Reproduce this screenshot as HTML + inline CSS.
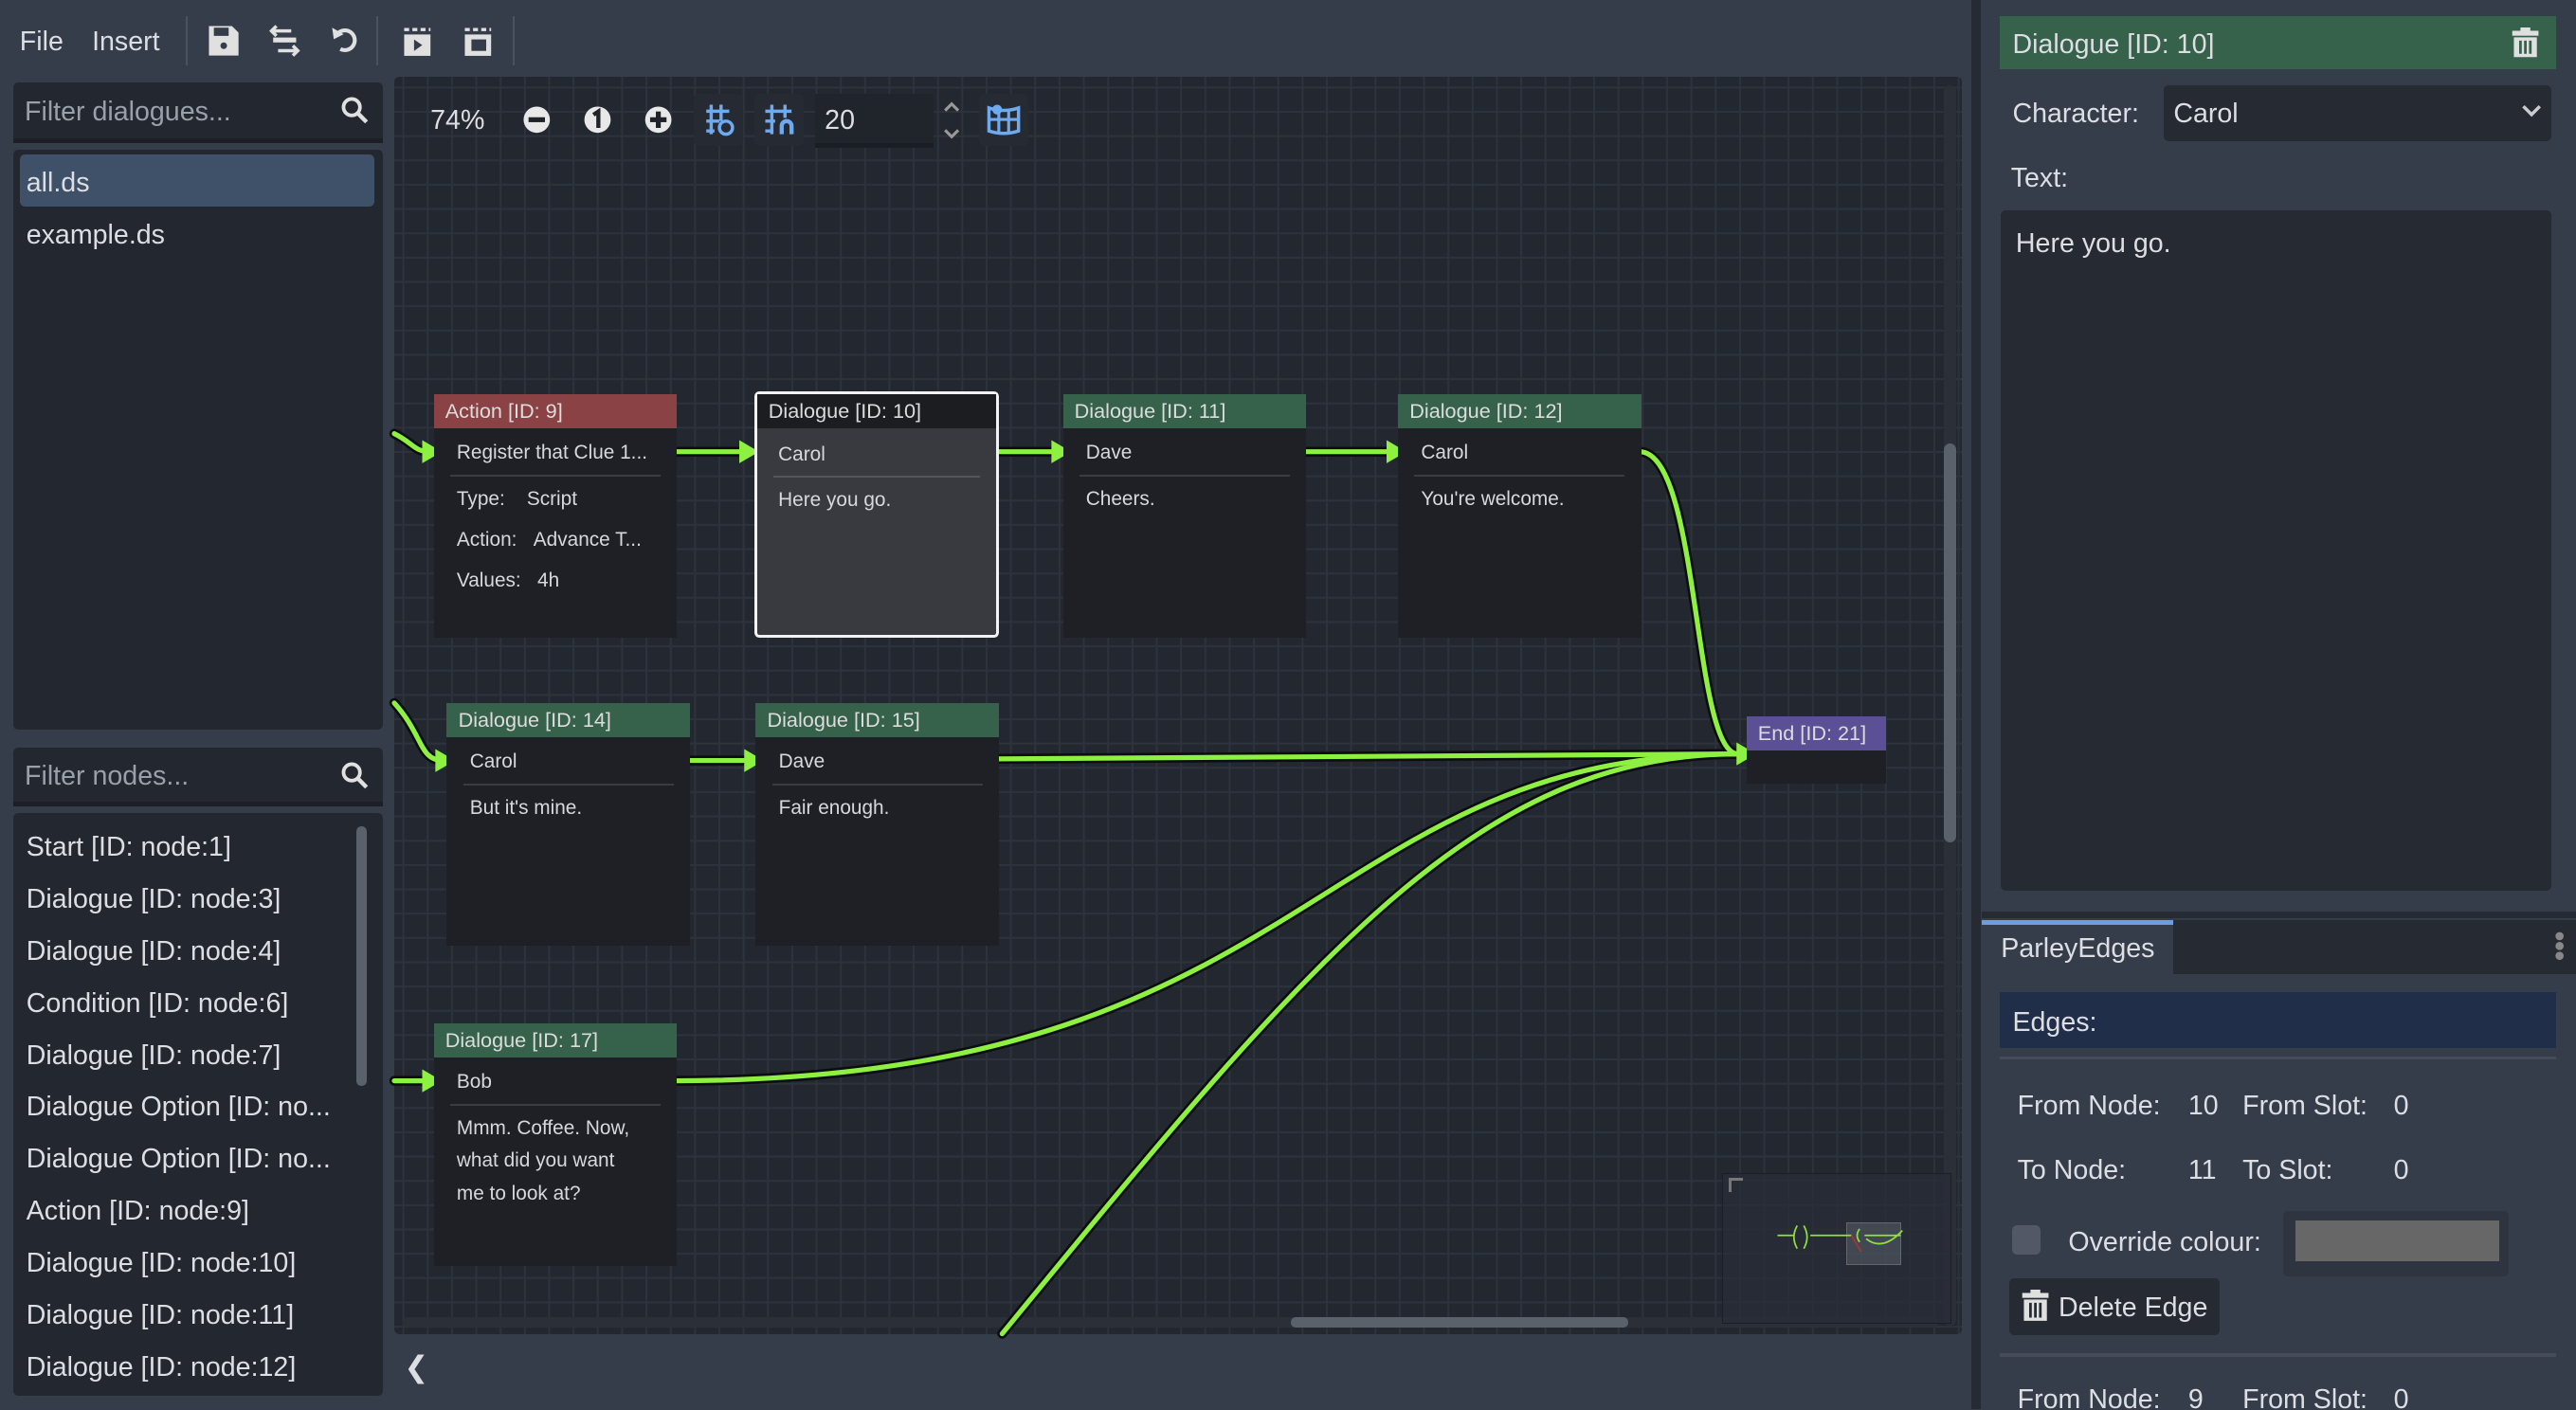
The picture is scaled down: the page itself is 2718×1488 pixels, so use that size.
<!DOCTYPE html>
<html><head><meta charset="utf-8"><style>
*{margin:0;padding:0;box-sizing:border-box}
html,body{width:2718px;height:1488px;overflow:hidden;background:#363d4a}
#r{position:absolute;left:0;top:0;width:1568px;height:858px;zoom:1.73342;font-family:"Liberation Sans",sans-serif;color:#dcdee3;background:#363d4a;overflow:hidden}
.a{position:absolute}
.t{font-size:16.5px;white-space:nowrap}
.n{position:absolute;background:#1f2025;font-size:12px;color:#d6d8dc}
.n .h{height:21px;line-height:21px;padding-left:7px;color:#dcdcdc;font-size:12.5px}
.n .row{position:absolute;white-space:nowrap}
.n .sep{position:absolute;height:1px;background:#3a3c42}
.grid{background-color:#232730;background-image:linear-gradient(#2d333d 1px,transparent 1px),linear-gradient(90deg,#2d333d 1px,transparent 1px);background-size:14.8px 14.8px;background-position:5px 6px}
</style></head><body><div id="r">

<div class="a t" style="left:12px;top:16px">File</div>
<div class="a t" style="left:56px;top:16px">Insert</div>
<div class="a" style="left:113px;top:10px;width:1px;height:30px;background:#4a5160"></div>
<div class="a" style="left:229px;top:10px;width:1px;height:30px;background:#4a5160"></div>
<div class="a" style="left:312px;top:10px;width:1px;height:30px;background:#4a5160"></div>
<svg class="a" style="left:125px;top:14px" width="22" height="22" viewBox="0 0 22 22"><path d="M2 2h14l4 4v14H2z" fill="#e0e0e0"/><rect x="5" y="3" width="9" height="5" fill="#363d4a"/><circle cx="11" cy="14" r="2" fill="#363d4a"/></svg>
<svg class="a" style="left:163px;top:14px" width="20" height="22" viewBox="0 0 20 22"><path d="M5 2L2 5l3 3M2 5h12M15 14l3 3-3 3M18 17H6" stroke="#e0e0e0" stroke-width="2" fill="none"/><rect x="3" y="9" width="14" height="3" fill="#e0e0e0"/></svg>
<svg class="a" style="left:200px;top:14px" width="20" height="20" viewBox="0 0 20 20"><path d="M6 6A6 6 0 1 1 7 16" stroke="#e0e0e0" stroke-width="2.4" fill="none"/><path d="M2 3l1 7 6-3z" fill="#e0e0e0"/></svg>
<svg class="a" style="left:244px;top:15px" width="20" height="20" viewBox="0 0 20 20"><path d="M2 3h3M7 3h3M12 3h3M17 3h1" stroke="#e0e0e0" stroke-width="2"/><rect x="2" y="6" width="16" height="13" fill="#e0e0e0"/><path d="M8 9l5 3.5-5 3.5z" fill="#363d4a"/></svg>
<svg class="a" style="left:281px;top:15px" width="20" height="20" viewBox="0 0 20 20"><path d="M2 3h3M7 3h3M12 3h3M17 3h1" stroke="#e0e0e0" stroke-width="2"/><rect x="2" y="6" width="16" height="13" fill="#e0e0e0"/><rect x="6" y="9" width="9" height="7" fill="#363d4a"/></svg>

<div class="a" style="left:8px;top:50px;width:225px;height:37px;background:#232830;border-radius:3px 3px 0 0;border-bottom:3px solid #1c2026"></div>
<div class="a t" style="left:15px;top:59px;color:#9aa0aa">Filter dialogues...</div>
<svg class="a" style="left:207px;top:58px" width="18" height="18" viewBox="0 0 18 18"><circle cx="7" cy="7" r="5" stroke="#e0e0e0" stroke-width="2.2" fill="none"/><path d="M11 11l5 5" stroke="#e0e0e0" stroke-width="2.5"/></svg>
<div class="a" style="left:8px;top:91px;width:225px;height:353px;background:#232830;border-radius:3px"></div>
<div class="a" style="left:12px;top:94px;width:216px;height:32px;background:#3e5169;border-radius:3px"></div>
<div class="a t" style="left:16px;top:102px">all.ds</div>
<div class="a t" style="left:16px;top:134px">example.ds</div>

<div class="a" style="left:8px;top:455px;width:225px;height:36px;background:#232830;border-radius:3px 3px 0 0;border-bottom:3px solid #1c2026"></div>
<div class="a t" style="left:15px;top:463px;color:#9aa0aa">Filter nodes...</div>
<svg class="a" style="left:207px;top:463px" width="18" height="18" viewBox="0 0 18 18"><circle cx="7" cy="7" r="5" stroke="#e0e0e0" stroke-width="2.2" fill="none"/><path d="M11 11l5 5" stroke="#e0e0e0" stroke-width="2.5"/></svg>
<div class="a" style="left:8px;top:495px;width:225px;height:355px;background:#232830;border-radius:3px"></div>
<div class="a" style="left:217px;top:503px;width:6px;height:158px;background:#5b616b;border-radius:3px"></div>
<div class="a t" style="left:16px;top:500px;line-height:31.7px">Start [ID: node:1]<br>Dialogue [ID: node:3]<br>Dialogue [ID: node:4]<br>Condition [ID: node:6]<br>Dialogue [ID: node:7]<br>Dialogue Option [ID: no...<br>Dialogue Option [ID: no...<br>Action [ID: node:9]<br>Dialogue [ID: node:10]<br>Dialogue [ID: node:11]<br>Dialogue [ID: node:12]</div>

<div class="a grid" style="left:240px;top:47px;width:954px;height:765px;border-radius:3px"></div>
<div class="a" style="left:1183px;top:52px;width:8px;height:755px;background:#2a2f38;border-radius:4px"></div>
<div class="a" style="left:1183px;top:270px;width:8px;height:243px;background:#5b616b;border-radius:4px"></div>
<div class="a" style="left:245px;top:802px;width:935px;height:6px;background:#2a2f38;border-radius:3px"></div>
<div class="a" style="left:786px;top:802px;width:205px;height:6px;background:#5b616b;border-radius:3px"></div>
<div class="a" style="left:1048px;top:714px;width:140px;height:92px;background:rgba(40,45,55,.75);border:1px solid #1b1e24"></div>
<div class="a" style="left:1052px;top:717px;width:9px;height:9px;border-left:2px solid #777;border-top:2px solid #777"></div>
<div class="a" style="left:1124px;top:744px;width:33px;height:26px;background:rgba(120,125,135,.35);border:1px solid #666"></div>
<svg class="a" style="left:1080px;top:740px" width="80" height="30"><path d="M2 12h10M14 6q-4 7 0 14M18 6q4 7 0 14M22 12h25M52 8q-3 4 0 8M55 12h22M56 14q10 8 22-5" stroke="#8ee040" stroke-width="1" fill="none"/><path d="M47 12l6 10" stroke="#a33" stroke-width="1"/></svg>

<div class="a t" style="left:262px;top:64px">74%</div>
<svg class="a" style="left:317px;top:63px" width="100" height="20"><circle cx="10" cy="10" r="8" fill="#e8e8e8"/><rect x="5" y="8.5" width="10" height="3" fill="#1f2228"/><circle cx="47" cy="10" r="8" fill="#e8e8e8"/><path d="M44.5 7l3-2v10" stroke="#1f2228" stroke-width="2.5" fill="none"/><circle cx="84" cy="10" r="8" fill="#e8e8e8"/><rect x="79" y="8.5" width="10" height="3" fill="#1f2228"/><rect x="82.5" y="5" width="3" height="10" fill="#1f2228"/></svg>
<div class="a" style="left:422px;top:57px;width:30px;height:32px;background:#262a33;border-radius:3px"></div>
<div class="a" style="left:459px;top:57px;width:30px;height:32px;background:#262a33;border-radius:3px"></div>
<div class="a" style="left:596px;top:57px;width:30px;height:32px;background:#262a33;border-radius:3px"></div>
<svg class="a" style="left:427px;top:62px" width="22" height="22" viewBox="0 0 22 22"><path d="M6 2v18M12 2v10M3 6h14M3 12h8M3 18h5" stroke="#6eaaf0" stroke-width="2"/><circle cx="15" cy="16" r="4" stroke="#6eaaf0" stroke-width="2" fill="none"/></svg>
<svg class="a" style="left:464px;top:62px" width="22" height="22" viewBox="0 0 22 22"><path d="M6 2v18M14 2v8M2 6h16M2 12h6M2 18h4" stroke="#6eaaf0" stroke-width="2"/><path d="M12 20v-5a3 3 0 0 1 6 0v5" stroke="#6eaaf0" stroke-width="2.5" fill="none"/></svg>
<div class="a" style="left:496px;top:57px;width:72px;height:33px;background:#20242b;border-bottom:3px solid #1a1d22"></div>
<div class="a t" style="left:502px;top:64px">20</div>
<svg class="a" style="left:572px;top:58px" width="14" height="30"><path d="M3 9l4-4 4 4M3 21l4 4 4-4" stroke="#999" stroke-width="1.8" fill="none"/></svg>
<svg class="a" style="left:600px;top:62px" width="22" height="22" viewBox="0 0 22 22"><path d="M2 4q9 3 18 0v14q-9 3-18 0z" stroke="#6eaaf0" stroke-width="2" fill="none"/><path d="M8 5v15M14 5v15M2 11h18" stroke="#6eaaf0" stroke-width="1.8"/><circle cx="7" cy="5" r="3" fill="#6eaaf0"/></svg>

<svg class="a" style="left:0;top:0" width="1200" height="858">
<g fill="none" stroke-linecap="round">
<g stroke="#0b0d10" stroke-width="6">
<path d="M240 264C252 270 252 275 262 275"/><path d="M410 275H455"/><path d="M607 275H642"/><path d="M793 275H848"/>
<path d="M998 275C1035 275 1030 459 1058 459"/><path d="M240 428C258 448 255 463 270 463"/><path d="M419 463H458"/>
<path d="M607 462C800 461 950 459 1058 459"/><path d="M410 658C800 658 800 459 1058 459"/><path d="M610 812C800 580 900 459 1058 459"/><path d="M240 658H262"/></g>
<g stroke="#8ef040" stroke-width="3">
<path d="M240 264C252 270 252 275 262 275"/><path d="M410 275H455"/><path d="M607 275H642"/><path d="M793 275H848"/>
<path d="M998 275C1035 275 1030 459 1058 459"/><path d="M240 428C258 448 255 463 270 463"/><path d="M419 463H458"/>
<path d="M607 462C800 461 950 459 1058 459"/><path d="M410 658C800 658 800 459 1058 459"/><path d="M610 812C800 580 900 459 1058 459"/><path d="M240 658H262"/></g>
</g>
<g fill="#8ef040"><path d="M257 268l12 7-12 7z"/><path d="M450 268l12 7-12 7z"/><path d="M640 268l12 7-12 7z"/><path d="M844 268l12 7-12 7z"/><path d="M265 456l12 7-12 7z"/><path d="M453 456l12 7-12 7z"/><path d="M257 651l12 7-12 7z"/><path d="M1057 452l12 7-12 7z"/></g>
</svg>

<div class="n" style="left:264px;top:240px;width:148px;height:148px"><div class="h" style="background:#8a4245">Action [ID: 9]</div>
<div class="row" style="left:14px;top:29px">Register that Clue 1...</div><div class="sep" style="left:10px;right:10px;top:49px"></div>
<div class="row" style="left:14px;top:57px">Type:&nbsp;&nbsp;&nbsp;&nbsp;Script</div><div class="row" style="left:14px;top:82px">Action:&nbsp;&nbsp;&nbsp;Advance T...</div><div class="row" style="left:14px;top:107px">Values:&nbsp;&nbsp;&nbsp;4h</div></div>

<div class="n" style="left:459px;top:238px;width:149px;height:150px;background:#393a40;border:2px solid #f2f2f2;border-radius:3px"><div class="h" style="background:#1c1d21;height:21px">Dialogue [ID: 10]</div>
<div class="row" style="left:13px;top:30px">Carol</div><div class="sep" style="left:10px;right:10px;top:50px;background:#55565c"></div><div class="row" style="left:13px;top:58px">Here you go.</div></div>

<div class="n" style="left:647px;top:240px;width:148px;height:148px"><div class="h" style="background:#36614a">Dialogue [ID: 11]</div>
<div class="row" style="left:14px;top:29px">Dave</div><div class="sep" style="left:10px;right:10px;top:49px"></div><div class="row" style="left:14px;top:57px">Cheers.</div></div>

<div class="n" style="left:851px;top:240px;width:148px;height:148px"><div class="h" style="background:#36614a">Dialogue [ID: 12]</div>
<div class="row" style="left:14px;top:29px">Carol</div><div class="sep" style="left:10px;right:10px;top:49px"></div><div class="row" style="left:14px;top:57px">You're welcome.</div></div>

<div class="n" style="left:272px;top:428px;width:148px;height:148px"><div class="h" style="background:#36614a">Dialogue [ID: 14]</div>
<div class="row" style="left:14px;top:29px">Carol</div><div class="sep" style="left:10px;right:10px;top:49px"></div><div class="row" style="left:14px;top:57px">But it's mine.</div></div>

<div class="n" style="left:460px;top:428px;width:148px;height:148px"><div class="h" style="background:#36614a">Dialogue [ID: 15]</div>
<div class="row" style="left:14px;top:29px">Dave</div><div class="sep" style="left:10px;right:10px;top:49px"></div><div class="row" style="left:14px;top:57px">Fair enough.</div></div>

<div class="n" style="left:264px;top:623px;width:148px;height:148px"><div class="h" style="background:#36614a">Dialogue [ID: 17]</div>
<div class="row" style="left:14px;top:29px">Bob</div><div class="sep" style="left:10px;right:10px;top:49px"></div><div class="row" style="left:14px;top:54px;line-height:20px">Mmm. Coffee. Now,<br>what did you want<br>me to look at?</div></div>

<div class="n" style="left:1063px;top:436px;width:85px;height:41px"><div class="h" style="background:#5b4f95">End [ID: 21]</div></div>

<div class="a t" style="left:246px;top:822px;font-size:18px">❮</div>

<div class="a" style="left:1200px;top:0;width:6px;height:858px;background:#262a32"></div>
<div class="a" style="left:1206px;top:0;width:362px;height:555px;background:#363d4a;border-radius:0 0 4px 4px"></div>
<div class="a" style="left:1217px;top:10px;width:339px;height:32px;background:#36614a"></div>
<div class="a t" style="left:1225px;top:18px">Dialogue [ID: 10]</div>
<svg class="a" style="left:1528px;top:17px" width="18" height="19" viewBox="0 0 18 19"><rect x="1" y="2" width="16" height="3" fill="#e0e0e0"/><rect x="6" y="0" width="6" height="3" fill="#e0e0e0"/><path d="M2 6h14v12H2z" fill="#e0e0e0"/><path d="M6 8v8M9 8v8M12 8v8" stroke="#36614a" stroke-width="1.6"/></svg>
<div class="a t" style="left:1225px;top:60px">Character:</div>
<div class="a" style="left:1317px;top:52px;width:236px;height:34px;background:#252a33;border-radius:3px"></div>
<div class="a t" style="left:1323px;top:60px">Carol</div>
<svg class="a" style="left:1534px;top:62px" width="14" height="12"><path d="M2 3l5 5 5-5" stroke="#ccc" stroke-width="2" fill="none"/></svg>
<div class="a t" style="left:1224px;top:99px">Text:</div>
<div class="a" style="left:1218px;top:128px;width:335px;height:414px;background:#252a33;border-radius:3px"></div>
<div class="a t" style="left:1227px;top:139px">Here you go.</div>

<div class="a" style="left:1206px;top:555px;width:362px;height:4px;background:#262a32"></div>
<div class="a" style="left:1323px;top:560px;width:245px;height:33px;background:#262a32"></div>
<div class="a" style="left:1206px;top:560px;width:117px;height:3px;background:#6a9ee0"></div>
<div class="a t" style="left:1218px;top:568px">ParleyEdges</div>
<svg class="a" style="left:1553px;top:566px" width="10" height="22"><circle cx="5" cy="4" r="2.5" fill="#888"/><circle cx="5" cy="10" r="2.5" fill="#888"/><circle cx="5" cy="16" r="2.5" fill="#888"/></svg>
<div class="a" style="left:1217px;top:604px;width:339px;height:34px;background:#212e4a"></div>
<div class="a t" style="left:1225px;top:613px">Edges:</div>
<div class="a" style="left:1217px;top:643px;width:339px;height:2px;background:#454b57"></div>
<div class="a t" style="left:1228px;top:664px">From Node:</div><div class="a t" style="left:1332px;top:664px">10</div>
<div class="a t" style="left:1365px;top:664px">From Slot:</div><div class="a t" style="left:1457px;top:664px">0</div>
<div class="a t" style="left:1228px;top:703px">To Node:</div><div class="a t" style="left:1332px;top:703px">11</div>
<div class="a t" style="left:1365px;top:703px">To Slot:</div><div class="a t" style="left:1457px;top:703px">0</div>
<div class="a" style="left:1225px;top:746px;width:17px;height:18px;background:#525865;border-radius:3px"></div>
<div class="a t" style="left:1259px;top:747px">Override colour:</div>
<div class="a" style="left:1390px;top:737px;width:137px;height:40px;background:#2e3440;border-radius:3px"></div>
<div class="a" style="left:1397px;top:743px;width:124px;height:25px;background:#676767"></div>
<div class="a" style="left:1223px;top:778px;width:128px;height:35px;background:#252a33;border-radius:3px"></div>
<svg class="a" style="left:1230px;top:785px" width="18" height="20" viewBox="0 0 18 20"><rect x="1" y="2" width="16" height="3" fill="#e0e0e0"/><rect x="6" y="0" width="6" height="3" fill="#e0e0e0"/><path d="M2 6h14v13H2z" fill="#e0e0e0"/><path d="M6 8v9M9 8v9M12 8v9" stroke="#252a33" stroke-width="1.6"/></svg>
<div class="a t" style="left:1253px;top:787px">Delete Edge</div>
<div class="a" style="left:1217px;top:824px;width:339px;height:2px;background:#454b57"></div>
<div class="a t" style="left:1228px;top:843px">From Node:</div><div class="a t" style="left:1332px;top:843px">9</div>
<div class="a t" style="left:1365px;top:843px">From Slot:</div><div class="a t" style="left:1457px;top:843px">0</div>
</div></body></html>
